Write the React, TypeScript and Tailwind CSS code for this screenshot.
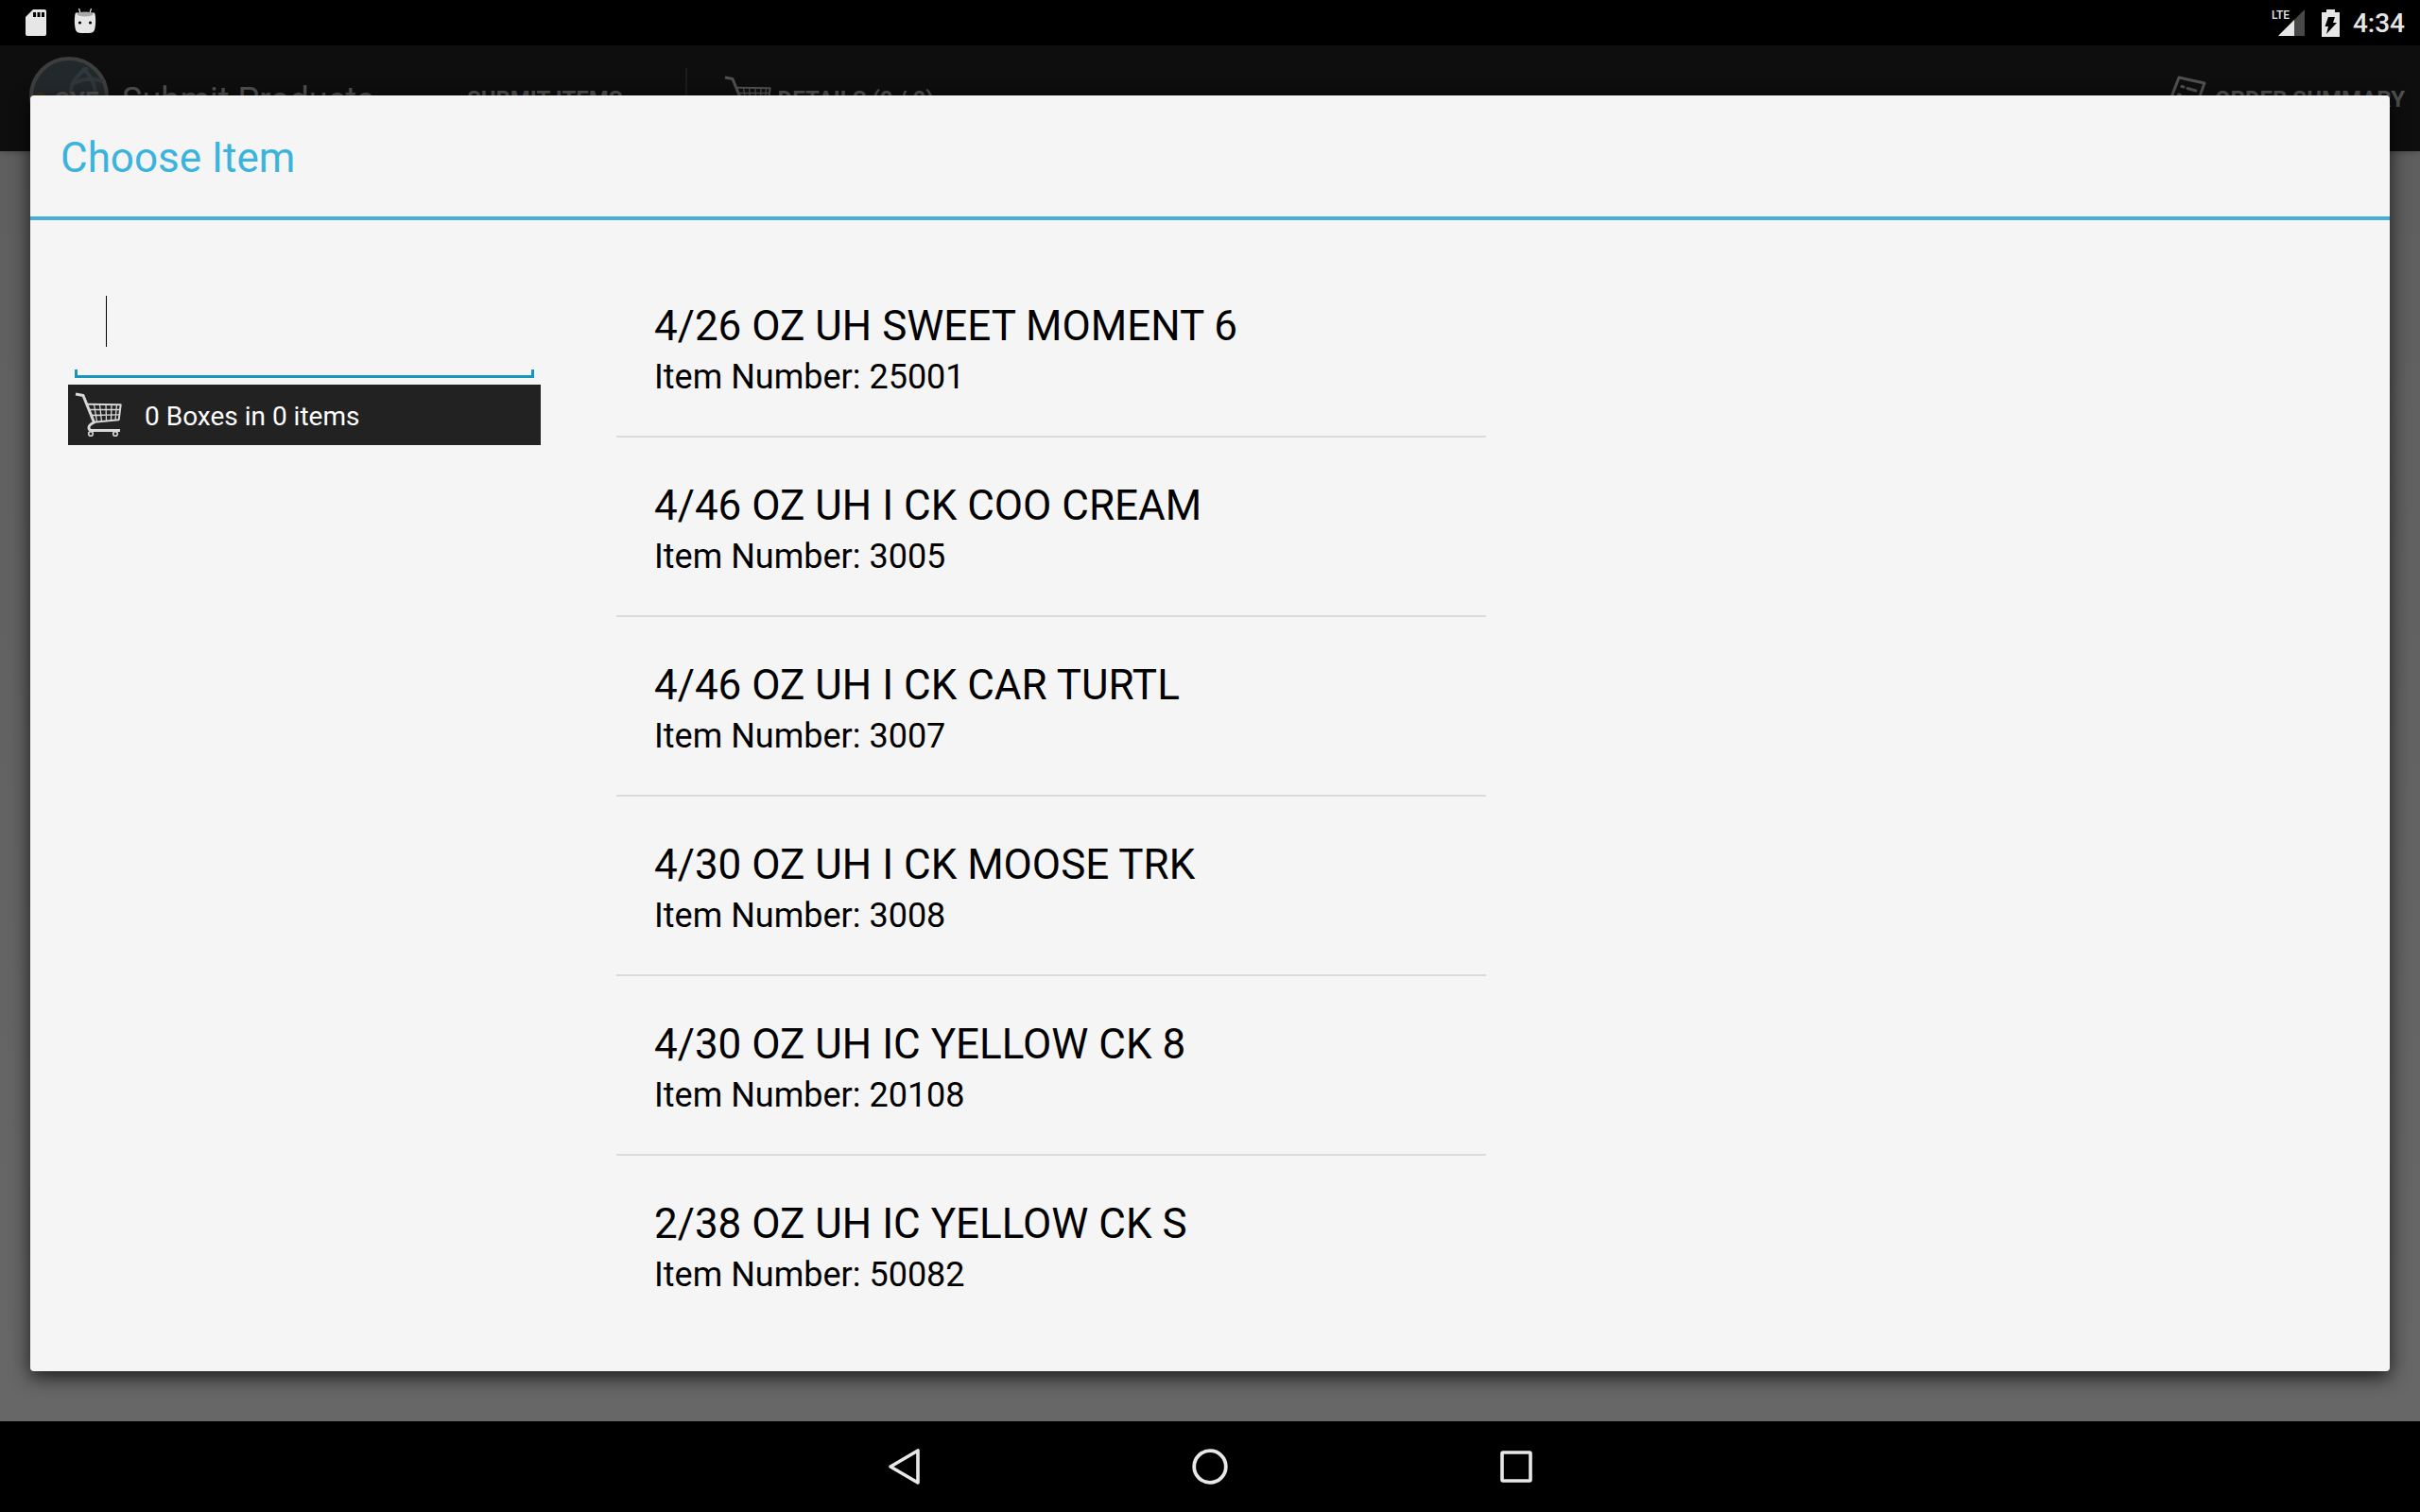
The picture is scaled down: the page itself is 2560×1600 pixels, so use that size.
import React from 'react';

const items = [
  { name: '4/26 OZ UH SWEET MOMENT 6', number: '25001' },
  { name: '4/46 OZ UH I CK COO CREAM', number: '3005' },
  { name: '4/46 OZ UH I CK CAR TURTL', number: '3007' },
  { name: '4/30 OZ UH I CK MOOSE TRK', number: '3008' },
  { name: '4/30 OZ UH IC YELLOW CK 8', number: '20108' },
  { name: '2/38 OZ UH IC YELLOW CK S', number: '50082' },
];

function CartIcon({ className }: { className: string }) {
  return (
    <svg viewBox="0 0 64 64" className={className} fill="none" stroke="currentColor" strokeLinejoin="round">
      <path d="M8 10l8 1.500L27.500 40c-4 2-6 4-5.500 6 .3 1.700 1.500 2.500 3 2.500h30" strokeWidth="3" />
      <path d="M21 20.800l34.700.4-2 16-26 2.500" strokeWidth="2" />
      <path d="M22.500 26.500h32.500M24.500 32.500l30-.6M27.500 21l3 18M33.500 21l2 18M40 21l.5 17.500M46 21l-.5 17M51.500 21l-1.500 17" strokeWidth="1.300" />
      <circle cx="24" cy="52" r="2.300" strokeWidth="1.600" />
      <circle cx="50" cy="52" r="2.300" strokeWidth="1.600" />
    </svg>
  );
}

function OrderIcon({ className }: { className: string }) {
  return (
    <svg viewBox="0 0 64 64" className={className} fill="none" stroke="currentColor" strokeLinejoin="round">
      <path d="M26 10l27 6-14 39-28-6z" strokeWidth="3" />
      <path d="M29 19.500l2 .5M35 21.500l9 2.500M25.500 28l2 .5M31.500 30l9 2.500M22 37l2 .5M28 39l9 2.500" strokeWidth="3" strokeLinecap="round" />
    </svg>
  );
}

function Logo() {
  return (
    <svg viewBox="0 0 84 84" className="mb-1 size-[84px]" fill="none">
      <circle cx="42" cy="42" r="40" fill="#22292c" stroke="#3e3e3e" strokeWidth="4" />
      <g stroke="#30373a" strokeWidth="4">
        <path d="M44 46c-2-14 4-26 18-34M44 30c10-6 22-8 34-4M56 12c10 8 14 18 14 30" />
      </g>
      <path d="M4 42c2-5 12-6 14 0z" fill="#3d2f14" />
      <text x="26" y="56" fontSize="26" fontWeight="700" fill="#505050">CYE</text>
    </svg>
  );
}

function StatusBar() {
  return (
    <div className="flex h-12 items-center justify-between bg-black pl-[27px] pr-4 text-[#e6e6e6]">
      <div className="flex items-center gap-[29px]">
        <svg viewBox="0 0 22 28" className="h-7 w-[22px]">
          <path fill="currentColor" d="M8 0h12a2 2 0 012 2v24a2 2 0 01-2 2H2a2 2 0 01-2-2V8z" />
          <path fill="#000" d="M8 3h3v5H8zM12.500 3h3v5h-3zM17 3h3v5h-3z" />
        </svg>
        <svg viewBox="0 0 24 28" className="mb-1 h-7 w-6">
          <path stroke="currentColor" strokeWidth="1.200" d="M5.500 1l1.500 5M18.500 1L17 6" />
          <path fill="currentColor" d="M2 5.500h20c1.500 3 1.500 13 0 18-1 3-3 3.500-10 3.500S3 26.500 2 23.500c-1.500-5-1.500-15 0-18z" />
          <ellipse cx="12" cy="7" rx="8.500" ry="2.500" fill="#a8a8a8" />
          <circle cx="6.500" cy="16" r="1.600" fill="#000" />
          <circle cx="17.500" cy="16" r="1.600" fill="#000" />
        </svg>
      </div>
      <div className="flex items-center">
        <div className="relative mr-[17px]">
          <svg viewBox="0 0 36 28" className="h-7 w-9">
            <path fill="#484848" d="M35 0v28H7z" />
            <path fill="currentColor" d="M24 11v17H7z" />
          </svg>
          <span className="absolute top-0 left-0 text-[12px] leading-3 font-medium">LTE</span>
        </div>
        <svg viewBox="0 0 19 29" className="mr-3.5 h-[29px] w-[19px]">
          <path fill="currentColor" d="M5 0h9v3h5v26H0V3h5z" />
          <path fill="#000" d="M7 8h7l-2 6h4L5 26l2-8H3.500z" />
        </svg>
        <span className="pt-0.5 text-[28px] leading-8 font-medium">4:34</span>
      </div>
    </div>
  );
}

function ActionBar() {
  return (
    <header className="flex h-28 items-center bg-[#0e0e0e] pl-[31px] pr-4 text-[24px] leading-8 font-bold text-[#505050] shadow-md">
      <Logo />
      <h1 className="ml-3.5 pt-1 text-[36px] leading-10 font-normal">Submit Products</h1>
      <button className="ml-[98px] pt-0.5">SUBMIT ITEMS</button>
      <div className="ml-[66px] h-16 w-0.5 bg-[#1c1c1c]" />
      <button className="ml-8 flex items-center">
        <CartIcon className="size-16" />
        <span className="pt-0.5">DETAILS (0 / 0)</span>
      </button>
      <button className="ml-auto flex items-center">
        <OrderIcon className="size-16" />
        <span className="pt-0.5">ORDER SUMMARY</span>
      </button>
    </header>
  );
}

function SearchPanel() {
  return (
    <div className="px-10">
      <label className="relative block px-[7px] pb-[7px]">
        <input type="text" aria-label="Search items" className="block h-[118px] w-full bg-transparent px-[33px] pb-6 text-[36px] text-black outline-none" />
        <span className="absolute top-10 left-10 h-[54px] w-px bg-black" />
        <span className="block h-[9px] border-x-3 border-b-3 border-[#1797c0]" />
      </label>
      <button className="flex h-16 w-full items-center gap-[17px] bg-[#222222] text-[28px] leading-8 text-white">
        <CartIcon className="size-16 text-[#d8d8d8]" />
        <span className="pt-1">0 Boxes in 0 items</span>
      </button>
    </div>
  );
}

function ItemList() {
  return (
    <ul className="divide-y-2 divide-[#dbdbdb] px-10 text-black">
      {items.map((item) => (
        <li key={item.number}>
          <button className="block w-full px-10 pt-[42px] pb-[38px] text-left">
            <span className="block text-[44px] leading-[60px]">{item.name}</span>
            <span className="block text-[36px] leading-[48px]">Item Number: {item.number}</span>
          </button>
        </li>
      ))}
    </ul>
  );
}

function ChooseItemDialog() {
  return (
    <section
      role="dialog"
      aria-labelledby="dialog-title"
      className="absolute inset-x-8 inset-y-[53px] flex flex-col overflow-hidden rounded-sm bg-[#f5f5f5] shadow-[0_6px_20px_rgba(0,0,0,0.75)]"
    >
      <div className="flex h-33 items-center border-b-4 border-[#48aed8] px-8 pt-1">
        <h2 id="dialog-title" className="text-[44px] leading-[60px] text-[#3bb3dd]">Choose Item</h2>
      </div>
      <div className="grid flex-1 grid-cols-[580fr_1000fr_916fr] py-10">
        <SearchPanel />
        <ItemList />
      </div>
    </section>
  );
}

function NavBar() {
  return (
    <nav className="flex h-24 items-center justify-center bg-black text-[#e8e8e8]">
      <button aria-label="Back" className="flex w-[324px] justify-center">
        <svg viewBox="0 0 48 48" className="size-12" fill="none" stroke="currentColor" strokeWidth="3.600" strokeLinejoin="round">
          <path d="M39 7v34L10 24z" />
        </svg>
      </button>
      <button aria-label="Home" className="flex w-[324px] justify-center">
        <svg viewBox="0 0 48 48" className="size-12" fill="none" stroke="currentColor" strokeWidth="3.800">
          <circle cx="24" cy="24" r="16.800" />
        </svg>
      </button>
      <button aria-label="Recent apps" className="flex w-[324px] justify-center">
        <svg viewBox="0 0 48 48" className="size-12" fill="none" stroke="currentColor" strokeWidth="3.600">
          <rect x="9" y="9" width="30" height="30" rx="1" />
        </svg>
      </button>
    </nav>
  );
}

export default function App() {
  return (
    <div className="flex min-h-screen flex-col font-[Roboto,sans-serif]">
      <StatusBar />
      <main className="relative flex-1 overflow-hidden bg-linear-to-b from-[#5e5e5e] to-[#676767]">
        <ActionBar />
        <ChooseItemDialog />
      </main>
      <NavBar />
    </div>
  );
}
